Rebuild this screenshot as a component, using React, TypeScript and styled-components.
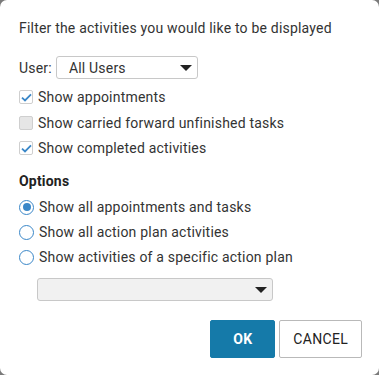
import React, { useState } from "react";
import styled, { createGlobalStyle } from "styled-components";

const GlobalStyle = createGlobalStyle`
  html, body {
    margin: 0;
    padding: 0;
    background: #7a7a7a;
  }
  body {
    font-family: Roboto, "Liberation Sans", Arial, sans-serif;
    letter-spacing: 0.2px;
    color: #333;
  }
`;

const Dialog = styled.div`
  width: 379px;
  height: 375px;
  box-sizing: border-box;
  background: #fff;
  border-radius: 7px;
  padding: 19px 17px 0 19px;
  display: flex;
  flex-direction: column;
`;

const Title = styled.p`
  margin: 0;
  font-size: 14px;
  line-height: 18px;
  color: #333;
`;

const UserRow = styled.div`
  display: flex;
  align-items: center;
  gap: 4px;
  margin-top: 19px;
  font-size: 14px;
`;

const SelectBox = styled.div<{ $width: number; $muted?: boolean }>`
  width: ${(p) => p.$width}px;
  height: 23px;
  box-sizing: border-box;
  border: 1px solid #c8c8c8;
  border-radius: 3px;
  background: ${(p) => (p.$muted ? "#f1f1f1" : "#fff")};
  display: flex;
  align-items: center;
  justify-content: space-between;
  padding: 0 5px 0 12px;
  font-size: 14px;
  color: #333;
`;

const Caret = styled.span`
  width: 0;
  height: 0;
  border-left: 6px solid transparent;
  border-right: 6px solid transparent;
  border-top: 6px solid #222;
`;

const List = styled.div<{ $gap: number }>`
  display: flex;
  flex-direction: column;
  gap: ${(p) => p.$gap}px;
  margin-top: 9px;
`;

const Row = styled.label`
  display: flex;
  align-items: center;
  gap: 5px;
  font-size: 14px;
  line-height: 18px;
  cursor: pointer;
`;

const Box = styled.span<{ $on: boolean }>`
  width: 14px;
  height: 14px;
  box-sizing: border-box;
  border: 1px solid #cfcfcf;
  border-radius: 2px;
  background: ${(p) => (p.$on ? "#fff" : "#e6e6e6")};
  display: flex;
  align-items: center;
  justify-content: center;
`;

const Radio = styled.span<{ $on: boolean }>`
  width: 15px;
  height: 15px;
  box-sizing: border-box;
  border: 1.5px solid #3a87c8;
  border-radius: 50%;
  background: #fff;
  display: flex;
  align-items: center;
  justify-content: center;
  &::after {
    content: "";
    width: 8px;
    height: 8px;
    border-radius: 50%;
    background: #3a87c8;
    display: ${(p) => (p.$on ? "block" : "none")};
  }
`;

const Heading = styled.div`
  font-size: 14px;
  font-weight: 700;
  margin-top: 16px;
  color: #222;
`;

const PlanSelect = styled.div`
  margin: 12px 0 0 18px;
`;

const Footer = styled.div`
  display: flex;
  justify-content: flex-end;
  gap: 4px;
  margin-top: 19px;
`;

const Button = styled.button<{ $primary?: boolean }>`
  height: 38px;
  box-sizing: border-box;
  padding: 0 ${(p) => (p.$primary ? 22 : 13)}px;
  border-radius: 2px;
  border: 1px solid ${(p) => (p.$primary ? "#157aa9" : "#b9b9b9")};
  background: ${(p) => (p.$primary ? "#157aa9" : "#fff")};
  color: ${(p) => (p.$primary ? "#fff" : "#222")};
  font-family: Roboto, "Liberation Sans", Arial, sans-serif;
  font-size: 14px;
  letter-spacing: 0.3px;
  font-weight: ${(p) => (p.$primary ? 700 : 400)};
  cursor: pointer;
`;

const Check = () => (
  <svg width="11" height="9" viewBox="0 0 11 9">
    <path d="M1 4.6 L4 7.4 L10 1.3" fill="none" stroke="#3a87c8" strokeWidth="1.8" />
  </svg>
);

function App() {
  const [checks, setChecks] = useState([true, false, true]);
  const [option, setOption] = useState(0);

  const checkLabels = [
    "Show appointments",
    "Show carried forward unfinished tasks",
    "Show completed activities",
  ];
  const optionLabels = [
    "Show all appointments and tasks",
    "Show all action plan activities",
    "Show activities of a specific action plan",
  ];

  return (
    <>
      <GlobalStyle />
      <Dialog>
        <Title>Filter the activities you would like to be displayed</Title>
        <UserRow>
          <span>User:</span>
          <SelectBox $width={142}>
            <span>All Users</span>
            <Caret />
          </SelectBox>
        </UserRow>
        <List $gap={7.5}>
          {checkLabels.map((label, i) => (
            <Row
              key={label}
              onClick={() => setChecks((prev) => prev.map((c, j) => (j === i ? !c : c)))}
            >
              <Box $on={checks[i]}>{checks[i] && <Check />}</Box>
              {label}
            </Row>
          ))}
        </List>
        <Heading>Options</Heading>
        <List $gap={7}>
          {optionLabels.map((label, i) => (
            <Row key={label} onClick={() => setOption(i)}>
              <Radio $on={option === i} />
              {label}
            </Row>
          ))}
        </List>
        <PlanSelect>
          <SelectBox $width={236} $muted>
            <span />
            <Caret />
          </SelectBox>
        </PlanSelect>
        <Footer>
          <Button $primary>OK</Button>
          <Button>CANCEL</Button>
        </Footer>
      </Dialog>
    </>
  );
}

export default App;
